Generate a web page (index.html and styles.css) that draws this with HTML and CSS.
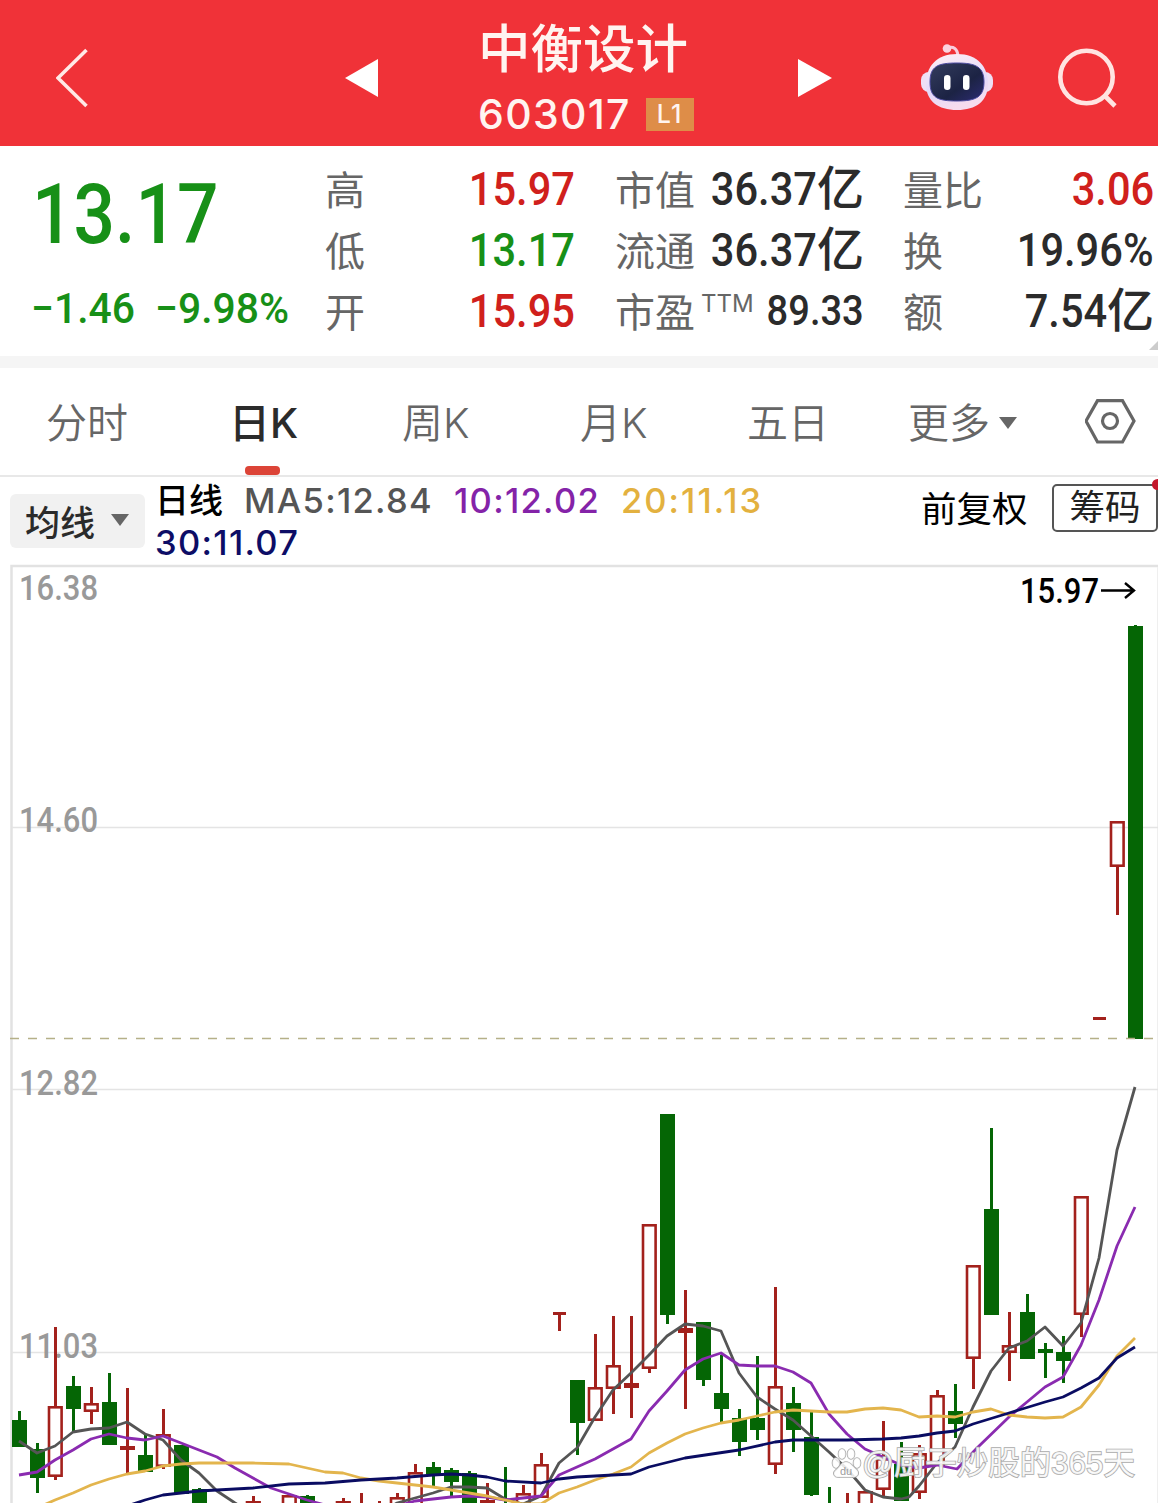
FILE: index.html
```html
<!DOCTYPE html>
<html lang="zh-CN">
<head>
  <meta charset="UTF-8" />
  <meta name="viewport" content="width=device-width, initial-scale=1.0"/>
  <title>中衡设计 603017</title>
  <link rel="stylesheet" href="styles.css">
</head>
<body>
  <header class="topbar">
    <svg class="icon" width="36" height="64" viewBox="0 0 36 64"><path d="M30.500 4 2 32 30.500 60" fill="none" stroke="#ffe9e6" stroke-width="3.600"/></svg>
    <svg class="icon" width="34" height="40" viewBox="0 0 34 40"><path d="M0 20 33 1V39Z" fill="#fff"/></svg>
    <div class="stock">
      <h1>中衡设计</h1>
      <div class="code">603017<span class="level">L1</span></div>
    </div>
    <svg class="icon" width="36" height="40" viewBox="0 0 36 40"><path d="M34 20 0 1V39Z" fill="#fff"/></svg>
    <svg class="icon" width="74" height="74" viewBox="0 0 74 74">
      <defs>
        <linearGradient id="shell" x1="0" y1="0" x2="0.3" y2="1">
          <stop offset="0" stop-color="#fff0f4"/><stop offset="0.65" stop-color="#e3d9fa"/><stop offset="1" stop-color="#f6dcee"/>
        </linearGradient>
        <linearGradient id="visor" x1="0" y1="0" x2="1" y2="1">
          <stop offset="0" stop-color="#343d5e"/><stop offset="0.6" stop-color="#1c2344"/><stop offset="1" stop-color="#2c2b72"/>
        </linearGradient>
      </defs>
      <path d="M26 7q10-3 11 8" fill="none" stroke="#f9ccdc" stroke-width="3"/>
      <circle cx="26" cy="7.500" r="4.300" fill="#fbd3df"/>
      <rect x="0" y="31" width="72" height="20" rx="8" fill="#eee0f5"/>
      <path d="M36 13C57 13 67 26 67 43S55 69 36 69 5 60 5 43 15 13 36 13Z" fill="url(#shell)"/>
      <path d="M36 22C55 22 63 26 63 41S55 60 36 60 9 57 9 41 17 22 36 22Z" fill="url(#visor)" stroke="#4b4aa0" stroke-width="1"/>
      <rect x="23" y="34" width="6.500" height="15" rx="3.200" fill="#fff"/>
      <rect x="42" y="34" width="6.500" height="15" rx="3.200" fill="#fff"/>
    </svg>
    <svg class="icon" width="62" height="62" viewBox="0 0 62 62"><g fill="none" stroke="#ffe4e1" stroke-width="4.600"><circle cx="28.500" cy="30" r="26.200"/><path d="M46 48 57 59"/></g></svg>
  </header>

  <section class="quote">
    <div class="now down">
      <div class="price"><span class="num">13.17</span></div>
      <div class="change"><span class="num">−1.46</span><span class="num">−9.98%</span></div>
    </div>
    <div class="col">
      <div class="row"><label>高</label><b class="up"><span class="num">15.97</span></b></div>
      <div class="row"><label>低</label><b class="down"><span class="num">13.17</span></b></div>
      <div class="row"><label>开</label><b class="up"><span class="num">15.95</span></b></div>
    </div>
    <div class="col">
      <div class="row"><label>市值</label><b><span class="num">36.37</span>亿</b></div>
      <div class="row"><label>流通</label><b><span class="num">36.37</span>亿</b></div>
      <div class="row"><label>市盈<sup>TTM</sup></label><b class="small"><span class="num">89.33</span></b></div>
    </div>
    <div class="col">
      <div class="row"><label>量比</label><b class="up"><span class="num">3.06</span></b></div>
      <div class="row"><label>换</label><b><span class="num">19.96%</span></b></div>
      <div class="row"><label>额</label><b><span class="num">7.54</span>亿</b></div>
    </div>
    <i class="corner"></i>
  </section>

  <nav class="tabs">
    <a>分时</a>
    <a class="active">日K</a>
    <a>周K</a>
    <a>月K</a>
    <a>五日</a>
    <a>更多<i class="caret"></i></a>
    <svg class="icon" width="52" height="46" viewBox="0 0 52 46"><g fill="none" stroke="#666" stroke-width="3.200"><path d="M12.500 1.600H37.500L49 22 37.500 43H12.500L1 22Z"/><circle cx="25" cy="22" r="7.500"/></g></svg>
  </nav>

  <section class="tools">
    <button class="ma-btn">均线<i class="caret"></i></button>
    <div class="ma">
      <span class="name">日线</span>
      <span class="ma5">MA5:12.84</span>
      <span class="ma10">10:12.02</span>
      <span class="ma20">20:11.13</span>
      <span class="ma30">30:11.07</span>
    </div>
    <div class="adjust">前复权</div>
    <button class="chips">筹码<i class="dot"></i></button>
  </section>

  <svg class="chart" id="chart" width="1158" height="939" viewBox="0 564 1158 939"></svg>

  <script>
    const RED = '#a3211c';
    const GREEN = '#056605';
    const STEP = 18;
    const FIRST = 19;

    // index, high, body top, body bottom, low, up
    const candles = [
      [0, 1411, 1420, 1447, 1447, 0], [1, 1443, 1449, 1478, 1493, 0],
      [2, 1327, 1406, 1477, 1480, 1], [3, 1376, 1386, 1409, 1432, 0],
      [4, 1387, 1403, 1412, 1424, 1], [5, 1373, 1402, 1445, 1445, 0],
      [6, 1388, 1446, 1450, 1474, 1], [7, 1434, 1455, 1472, 1472, 0],
      [8, 1409, 1434, 1467, 1469, 1], [9, 1445, 1445, 1494, 1494, 0],
      [10, 1488, 1489, 1512, 1512, 0], [13, 1496, 1501, 1512, 1512, 1],
      [15, 1495, 1495, 1512, 1512, 1], [16, 1495, 1496, 1512, 1512, 0],
      [18, 1498, 1501, 1512, 1512, 1], [19, 1493, 1504, 1512, 1512, 1],
      [20, 1501, 1506, 1512, 1512, 1], [21, 1493, 1497, 1512, 1512, 1],
      [22, 1464, 1472, 1512, 1512, 1], [23, 1462, 1467, 1474, 1486, 0],
      [24, 1468, 1470, 1482, 1496, 0], [25, 1471, 1473, 1512, 1512, 0],
      [26, 1483, 1500, 1504, 1512, 1], [27, 1467, 1504, 1512, 1512, 0],
      [28, 1485, 1493, 1512, 1512, 1], [29, 1453, 1464, 1498, 1498, 1],
      [31, 1380, 1380, 1423, 1455, 0], [32, 1334, 1387, 1421, 1421, 1],
      [33, 1316, 1365, 1389, 1414, 1], [34, 1316, 1383, 1388, 1418, 1],
      [35, 1224, 1224, 1369, 1373, 1], [36, 1114, 1114, 1315, 1324, 0],
      [37, 1290, 1328, 1333, 1409, 1], [38, 1322, 1322, 1380, 1386, 0],
      [39, 1355, 1393, 1409, 1422, 0], [40, 1409, 1418, 1442, 1456, 0],
      [41, 1356, 1418, 1430, 1440, 0], [42, 1287, 1386, 1465, 1474, 1],
      [43, 1387, 1403, 1430, 1452, 0], [44, 1412, 1437, 1495, 1496, 0],
      [45, 1487, 1504, 1512, 1512, 0], [46, 1493, 1505, 1512, 1512, 1],
      [47, 1491, 1491, 1512, 1512, 1], [48, 1421, 1458, 1490, 1497, 1],
      [49, 1442, 1464, 1501, 1501, 0], [50, 1445, 1453, 1493, 1499, 1],
      [51, 1390, 1395, 1466, 1466, 1], [52, 1384, 1411, 1424, 1438, 0],
      [53, 1265, 1265, 1359, 1389, 1], [54, 1128, 1209, 1315, 1315, 0],
      [55, 1312, 1345, 1353, 1381, 1], [56, 1294, 1312, 1359, 1359, 0],
      [57, 1343, 1349, 1353, 1378, 0], [58, 1336, 1352, 1361, 1383, 0],
      [59, 1196, 1196, 1315, 1337, 1], [61, 821, 821, 867, 915, 1],
      [62, 625, 626, 1039, 1039, 0]
    ];

    const lines = {
      '#555555': '19,1441 37,1453 55,1446 73,1432 91,1429 109,1428 127,1422 145,1434 163,1440 181,1460 199,1473 217,1491 235,1503 253,1514 379,1514 397,1503 415,1498 433,1493 451,1487 469,1487 487,1488 505,1499 523,1504 541,1496 559,1463 577,1448 595,1417 613,1390 631,1373 649,1355 667,1336 685,1324 703,1326 721,1331 739,1373 757,1397 775,1409 793,1420 811,1436 829,1452 847,1469 865,1490 883,1497 901,1499 909,1497 919,1486 937,1463 955,1447 973,1407 991,1371 1009,1348 1027,1341 1045,1327 1063,1346 1081,1323 1099,1258 1117,1150 1135,1087',
      '#8a2bb0': '19,1475 37,1472 55,1460 73,1450 91,1439 109,1434 127,1438 145,1440 163,1436 181,1443 199,1450 217,1457 235,1468 253,1478 271,1488 289,1494 307,1500 325,1505 397,1506 415,1501 433,1499 451,1497 469,1496 487,1497 505,1500 523,1498 541,1496 559,1475 577,1467 595,1459 613,1449 631,1439 649,1411 667,1391 685,1370 703,1359 721,1353 739,1365 757,1366 775,1366 793,1372 811,1383 829,1414 847,1434 865,1449 883,1457 901,1465 919,1468 937,1465 957,1469 977,1448 1009,1417 1027,1402 1045,1387 1063,1377 1081,1345 1099,1300 1117,1246 1135,1207',
      '#e3b54d': '37,1508 55,1500 73,1493 91,1485 109,1479 127,1474 145,1471 163,1466 181,1464 199,1463 253,1463 289,1464 307,1468 325,1472 343,1473 361,1478 379,1481 397,1483 415,1485 433,1487 451,1490 469,1493 487,1496 505,1500 523,1504 541,1504 559,1493 577,1487 595,1480 613,1474 631,1467 649,1453 667,1443 685,1434 703,1428 721,1423 739,1420 757,1416 775,1412 793,1410 811,1411 829,1412 847,1412 865,1409 883,1408 901,1410 919,1417 937,1416 955,1417 973,1412 991,1409 1009,1415 1027,1417 1045,1418 1063,1417 1081,1407 1099,1385 1117,1356 1135,1338',
      '#0a0c62': '127,1506 145,1500 163,1495 181,1493 199,1491 217,1490 253,1488 289,1484 325,1483 361,1480 397,1478 433,1475 451,1474 469,1475 487,1477 505,1481 541,1483 559,1479 577,1477 631,1474 649,1467 685,1458 739,1450 775,1442 793,1440 847,1440 883,1439 901,1438 919,1436 937,1433 955,1431 973,1424 1009,1413 1045,1402 1063,1397 1081,1388 1099,1378 1117,1358 1135,1347'
    };

    const labels = [['16.38', 600], ['14.60', 832], ['12.82', 1095], ['11.03', 1358]];

    function drawFrame() {
      let out = '<path class="frame" d="M1158 566H11.500V1503"/><path class="edge" d="M1157.500 567V1503"/>';
      [827.5, 1089.5, 1352.5].forEach(y => {
        out += `<path class="grid" d="M12 ${y}H1158"/>`;
      });
      labels.forEach(([text, y]) => {
        out += `<text class="axis" x="19" y="${y}" textLength="79" lengthAdjust="spacingAndGlyphs">${text}</text>`;
      });
      return out;
    }

    function drawCandle([i, high, top, bottom, low, up]) {
      const x = FIRST + i * STEP;
      const color = up ? RED : GREEN;
      if (up && bottom - top > 6) {
        return `<path d="M${x + 0.5} ${high}V${top}M${x + 0.5} ${bottom}V${low}" stroke="${color}" stroke-width="3"/>
          <rect x="${x - 6}" y="${top + 1.3}" width="12.600" height="${bottom - top - 2.6}" fill="none" stroke="${color}" stroke-width="2.600"/>`;
      }
      return `<path d="M${x + 0.5} ${high}V${low}" stroke="${color}" stroke-width="3"/>
        <rect x="${x - 7}" y="${top}" width="15" height="${bottom - top}" fill="${color}"/>`;
    }

    function drawLines() {
      return Object.entries(lines).map(([color, points]) =>
        `<polyline points="${points}" fill="none" stroke="${color}" stroke-width="2.800" stroke-linejoin="round"/>`
      ).join('');
    }

    function drawMarks() {
      return `
        <path d="M553 1313.500H566M559.500 1313V1331M1093 1018.500H1106" stroke="${RED}" stroke-width="3" fill="none"/>
        <path class="last" d="M10 1038.500H1158"/>
        <text class="peak" x="1020" y="603" textLength="79" lengthAdjust="spacingAndGlyphs">15.97</text>
        <path d="M1101 590.500H1134M1125 583 1134 590.500 1125 598" fill="none" stroke="#000" stroke-width="2.400"/>`;
    }

    function drawWatermark() {
      return `
        <g class="mark">
          <ellipse cx="836" cy="1463" rx="3.500" ry="5"/><ellipse cx="842" cy="1454" rx="3.500" ry="5"/>
          <ellipse cx="851" cy="1454" rx="3.500" ry="5"/><ellipse cx="857" cy="1463" rx="3.500" ry="5"/>
          <path d="M846 1462C851 1462 853 1467 857 1470 860 1474 857 1478 852 1477H840C834 1478 832 1473 836 1470 840 1467 841 1462 846 1462Z"/>
          <text class="du" x="840" y="1475">du</text>
          <text x="862" y="1474" textLength="273" lengthAdjust="spacingAndGlyphs">@厨子炒股的365天</text>
        </g>`;
    }

    document.getElementById('chart').innerHTML =
      drawFrame() + candles.map(drawCandle).join('') + drawLines() + drawMarks() + drawWatermark();
  </script>
</body>
</html>
```
FILE: styles.css
```css
* {
  box-sizing: border-box;
}
body {
  margin: 0;
  width: 1158px;
  height: 1503px;
  overflow: hidden;
  background: #fff;
  color: #2b2b2b;
  font-family: Inter, "Noto Sans CJK SC", sans-serif;
}
.icon, .chart {
  display: block;
}
.num {
  display: inline-block;
  font-family: Roboto, sans-serif;
  font-weight: 500;
  transform: scaleX(0.885);
  transform-origin: right;
}
.up {
  color: #d0201c;
}
.down {
  color: #179017;
}

/* top bar */
.topbar {
  display: grid;
  grid-template-columns: 289px 135px 318px 123px 137px 1fr;
  align-items: center;
  height: 146px;
  padding: 10px 0 0 56px;
  background: #f03238;
  color: #fff4f0;
}
.stock {
  margin: 2px 0 0 -2px;
}
.stock h1 {
  margin: 0;
  font-size: 52.5px;
  font-weight: 500;
  line-height: 70px;
}
.code {
  display: flex;
  align-items: center;
  height: 60px;
  font-size: 41px;
  font-weight: 500;
  letter-spacing: 1.3px;
  white-space: nowrap;
}
.level {
  width: 48px;
  height: 33px;
  margin-left: 15px;
  background: #de8d48;
  font-size: 25px;
  line-height: 33px;
  text-align: center;
}

/* quote */
.quote {
  position: relative;
  display: grid;
  grid-template-columns: 291px 250px 248px 250px;
  height: 222px;
  padding: 11px 0 0 34px;
  border-bottom: 12px solid #f5f5f5;
}
.quote .col:nth-child(3) {
  margin-left: 40px;
  margin-right: -41px;
}
.quote .col:nth-child(4) {
  margin-left: 80px;
  margin-right: -81px;
}
.now .num {
  transform-origin: left;
}
.price {
  margin-left: -2px;
  font-size: 84px;
  line-height: 112px;
}
.price .num {
  transform: scaleX(0.87);
}
.change {
  display: grid;
  grid-template-columns: 124px 1fr;
  margin-left: -3px;
  font-size: 43px;
  line-height: 74px;
}
.change .num {
  transform: scaleX(0.95);
}
.row {
  display: flex;
  justify-content: space-between;
  align-items: center;
  height: 61px;
  white-space: nowrap;
}
.row label {
  color: #666;
  font-size: 40px;
}
.row b {
  font-size: 47px;
  font-weight: 500;
  line-height: 61px;
}
.row b.small {
  font-size: 43px;
}
.row sup {
  margin-left: 6px;
  font-size: 24px;
  line-height: 0;
}
.corner {
  position: absolute;
  right: 0;
  bottom: 6px;
  border-left: 9px solid transparent;
  border-bottom: 9px solid #ccc;
}

/* tabs */
.tabs {
  display: grid;
  grid-template-columns: 184px 172px 178px 167px 161px 177px 1fr;
  align-items: center;
  height: 109px;
  padding-left: 46px;
  border-bottom: 2px solid #e8e8e8;
  color: #666;
  font-size: 41px;
  font-weight: 350;
}
.tabs a {
  position: relative;
  line-height: 111px;
  height: 107px;
}
.tabs .active {
  left: -1px;
  color: #2b2b2b;
  font-weight: 500;
}
.tabs .active::after {
  content: "";
  position: absolute;
  left: 16px;
  bottom: 0;
  width: 35px;
  height: 9px;
  border-radius: 4px;
  background: #dc4437;
}
.caret {
  display: inline-block;
  border: 9.5px solid transparent;
  border-top: 12px solid #666;
  border-bottom: 0;
}
.tabs .caret {
  margin-left: 9px;
  vertical-align: 9px;
}

/* moving averages */
.tools {
  display: flex;
  height: 87px;
  padding-left: 10px;
}
.tools button {
  border: 0;
  font-family: inherit;
  white-space: nowrap;
}
.ma-btn {
  display: flex;
  align-items: center;
  gap: 16px;
  width: 135px;
  height: 54px;
  margin-top: 17px;
  padding: 0 0 2px 15px;
  border-radius: 6px;
  background: #f1f1f1;
  color: #2b2b2b;
  font-size: 35px;
  font-weight: 500;
}
.ma {
  display: flex;
  flex: none;
  flex-wrap: wrap;
  align-content: flex-start;
  column-gap: 21px;
  width: 776px;
  margin-top: 3px;
  padding-left: 10px;
  padding-right: 60px;
  font-size: 34.5px;
  font-weight: 500;
  line-height: 42px;
  letter-spacing: 1.3px;
}
.ma .name {
  color: #000;
  font-size: 34px;
  letter-spacing: 0;
}
.ma5 {
  color: #555;
}
.ma10 {
  color: #8423a8;
}
.ma20 {
  color: #e3b13f;
  letter-spacing: 2px;
}
.ma30 {
  color: #0d0d66;
}
.adjust {
  flex: none;
  width: 131px;
  padding-top: 8px;
  color: #000;
  font-size: 35.5px;
  line-height: 50px;
  white-space: nowrap;
}
.tools .chips {
  position: relative;
  flex: none;
  width: 106px;
  height: 48px;
  margin-top: 7px;
  padding: 0;
  border: 2px solid #555;
  border-radius: 5px;
  background: #fff;
  color: #222;
  font-size: 35.5px;
  line-height: 44px;
}
.dot {
  position: absolute;
  top: -7px;
  right: -7px;
  width: 11px;
  height: 11px;
  border-radius: 50%;
  background: #c4182c;
}

/* chart */
.frame {
  fill: none;
  stroke: #e2e2e2;
  stroke-width: 2.5;
}
.edge {
  stroke: #efefef;
}
.grid {
  stroke: #e4e4e4;
  stroke-width: 1.5;
}
.last {
  stroke: #b5b088;
  stroke-width: 1.6;
  stroke-dasharray: 9 9;
}
.axis, .peak {
  font-family: Roboto, sans-serif;
  font-size: 35px;
  font-weight: 500;
  fill: #999;
}
.peak {
  fill: #000;
}
.mark {
  fill: #fff;
  fill-opacity: 0.85;
  stroke: #aaa;
  stroke-width: 1.6;
  paint-order: stroke;
  font-family: "Liberation Sans", "Noto Sans CJK SC", sans-serif;
  font-size: 32px;
}
.mark .du {
  fill: #888;
  stroke: none;
  font-size: 11px;
}
```
